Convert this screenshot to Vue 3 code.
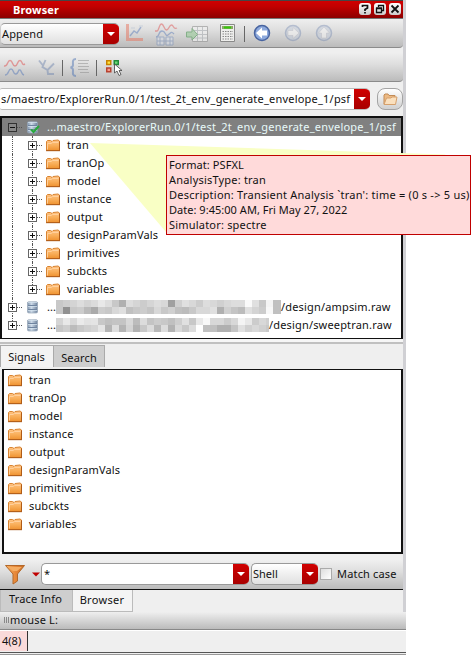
<script setup>
const names = ['tran', 'tranOp', 'model', 'instance', 'output', 'designParamVals', 'primitives', 'subckts', 'variables']
const runs = [
  {
    name: '/design/ampsim.raw',
    cells: [
      'c8 cf d4 dd d4 db e8 dd c8 b0 dd d5 cc d5 dd d8 a0 d0 e0 d8 cc dd d8 d0 d8 dd dd fa e0 c8 f4 c0',
      'c8 91 c8 cc ba aa cd c8 d8 df c0 c8 cc c4 d8 c8 d0 c0 bc c8 d8 d8 e0 b0 d0 c4 bc e0 d4 cc f8 c0',
    ],
  },
  {
    name: '/design/sweeptran.raw',
    cells: [
      'd5 e8 d8 ea e2 e4 c8 c0 c4 c4 d8 bc dc c4 cc c8 c0 ce e0 c8 e8 f8 d8 d8 cc d8 f4 e8 cc d8 d0',
      'c6 ce bc c8 cf d4 e5 b4 dd b4 d4 b2 c8 dc b8 dc b2 d8 c8 dc ff c0 c0 b0 b0 c4 e0 d0 d8 d0 c8',
    ],
  },
]
runs.forEach(r => { r.cells = r.cells.map(l => l.split(' ').map(c => '#' + c + c + c)) })
const info = [
  ['Format: PSFXL', 'i0'],
  ['AnalysisType: tran', 'i1'],
  ["Description: Transient Analysis `tran': time = (0 s -> 5 us)", 'i2'],
  ['Date: 9:45:00 AM, Fri May 27, 2022', 'i3'],
  ['Simulator: spectre', 'i4'],
]
</script>

<template>
  <svg class="defs" width="0" height="0">
    <defs>
      <linearGradient id="gFolder" x1="0" y1="0" x2="0" y2="1"><stop offset="0" stop-color="#ffc486" /><stop offset=".5" stop-color="#f9b05c" /><stop offset="1" stop-color="#ef9230" /></linearGradient>
      <linearGradient id="gFunnel"><stop offset="0" stop-color="#f8b568" /><stop offset=".5" stop-color="#e8893a" /><stop offset="1" stop-color="#c96a20" /></linearGradient>
      <linearGradient id="gDb"><stop offset="0" stop-color="#8195ad" /><stop offset=".4" stop-color="#cbd8e6" /><stop offset="1" stop-color="#6e829c" /></linearGradient>
      <symbol id="folder" viewBox="0 0 14 13">
        <path d="M.5 11.5V2.500L1.500 1.500H4.500L6 2.500L7 1.500L12 1L13.500 2V11.500Z" fill="url(#gFolder)" stroke="#d98431" />
        <path d="M1.500 10.500V4.500H5L6.500 3.500H12.500" fill="none" stroke="#ffd3a0" stroke-width=".9" />
        <path d="M0 11.700H14M13.600 2.500V11.500" fill="none" stroke="#a65312" stroke-width=".9" />
      </symbol>
      <symbol id="db" viewBox="0 0 11 13">
        <path d="M.5 1.500Q.5 .8 2 .8H9Q10.500 .8 10.500 1.500V11Q10.500 12 9 12H2Q.5 12 .5 11Z" fill="url(#gDb)" stroke="#96a6b8" stroke-width=".7" />
        <path d="M1 4.500H10M1 8.500H10" fill="none" stroke="#6f84a0" />
        <path d="M1 1.500H10M1 5.500H10M1 9.500H10" fill="none" stroke="#d9e6f0" stroke-width=".7" />
      </symbol>
    </defs>
  </svg>

  <div class="shot">
    <div class="upper">
      <div class="panel">
        <header class="title">
          <span>Browser</span>
          <div class="wins">
            <svg class="win" viewBox="0 0 12 12"><path d="M3.500 4V2.500H8.500V5L6 6.500V8M6 9V10.500" fill="none" stroke="#111" stroke-width="1.700" /></svg>
            <svg class="win" viewBox="0 0 12 12"><path d="M4.500 4V2.500H9.500V7.500H8M4 2.500H10M2.500 5.500H7.500V9.500H2.500ZM2 5H8" fill="none" stroke="#111" stroke-width="1.300" /></svg>
            <svg class="win" viewBox="0 0 12 12"><path d="M2.500 2.500L9.500 9.500M9.500 2.500L2.500 9.500" stroke="#111" stroke-width="1.800" /></svg>
          </div>
        </header>

        <div class="bar bar1">
          <div class="combo c-append"><span class="val t-append">Append</span><i class="drop"></i></div>
          <svg class="tools" width="220" height="28" viewBox="119 19 220 28">
            <g opacity=".45" fill="none">
              <path d="M127.500 24V39.500H143" stroke="#e86850" stroke-width="3" />
              <path d="M130 36L134 31L137 33L141 27" stroke="#5477b8" stroke-width="1.400" />
              <path d="M139 26H143M131 28H135" stroke="#aabbd0" />
              <path d="M155 31H157C159 31 159 24 161.500 24S164 30 166.500 30S169 25 171.500 25S173 30 177 28" stroke="#dd4848" stroke-width="1.300" />
              <path d="M156 37C160 37 158 31 162 31S165 37 168 35S171 31 174 34" stroke="#5477b8" stroke-width="1.300" />
              <path d="M157 37H164V45H157ZM166 37H173V45H166ZM157 41H173M160 37V45M170 37V45" fill="#dfe5ef" stroke="#6a85b6" />
            </g>
            <g opacity=".65">
              <path d="M192.500 26.500H207.500V41.500H192.500Z" fill="#f1f1f1" stroke="#999" />
              <path d="M193 30.500H207M193 34.500H207M193 38H207M197.500 27V41M202.500 27V41" stroke="#b2b6ba" />
              <path d="M186.500 32H192V28.500L197.500 34.500L192 40V37H186.500Z" fill="#9ecb9e" stroke="#599b60" />
            </g>
            <path d="M220.500 24.500H234.500V41.500H220.500Z" fill="#eeeeec" stroke="#898989" />
            <path d="M222 27.500H233" stroke="#8aab65" stroke-width="3" /><path d="M224 27.500H231" stroke="#36c70b" stroke-width="2" />
            <path d="M222.500 31.500H233M222.500 34H233M222.500 36.500H233M222.500 39H233" stroke="#888" stroke-width="1.200" stroke-dasharray="1.500 1" />
            <path d="M244.500 26V42" stroke="#666" />
            <circle cx="262" cy="33" r="7.500" fill="#8da9dc" stroke="#4864a0" stroke-width="1.500" /><path d="M256 33L262 27.500V30.500H267V35.500H262V38.500Z" fill="#fff" />
            <g opacity=".4"><circle cx="293" cy="33" r="7.500" fill="#bdc9dc" stroke="#6e84af" stroke-width="1.500" /><path d="M299 33L293 27.500V30.500H288V35.500H293V38.500Z" fill="#fff" stroke="#99a" stroke-width=".5" /></g>
            <g opacity=".4"><circle cx="324" cy="33" r="7.500" fill="#bdc9dc" stroke="#6e84af" stroke-width="1.500" /><path d="M324 27L318.500 33H321.500V38H326.500V33H329.500Z" fill="#fff" stroke="#99a" stroke-width=".5" /></g>
          </svg>
        </div>

        <div class="bar bar2">
          <svg width="130" height="28" viewBox="0 53 130 28">
            <g fill="none" opacity=".48">
              <path d="M4 66C8 67 7 60.500 10 60.500S12 66 15 66S17 60.500 20 60.500S21 66 25 64" stroke="#dd4848" stroke-width="1.400" />
              <path d="M5 75C9 75 8 69 11 69S13 75 16 74S18 69 20 70S21 74 24 75" stroke="#5477b8" stroke-width="1.400" />
              <path d="M39 60.500L43 65.500M45.500 60L42.500 67L47.500 70M54 63.500L47.500 70L48 74H54" stroke="#7187b0" stroke-width="1.900" />
              <path d="M76 59C72 59 73 62 73 65Q73 67 70.500 67.500Q73 68 73 70C73 73 72 76 76 76" stroke="#4c73b4" stroke-width="2" />
              <path d="M78 60.500H89M78 63.500H88M78 66.500H89M78 69.500H88M80 72.500H89" stroke="#888" stroke-width="1.200" />
            </g>
            <path d="M62.500 60V76M96.500 60V76" stroke="#666" />
            <path d="M106.750 60.750H110.750V64.500H106.750Z" fill="#ffe440" stroke="#c88200" stroke-width="1.500" />
            <path d="M114.250 60.750H118.250V64.500H114.250Z" fill="#6fdc7a" stroke="#218b38" stroke-width="1.500" />
            <path d="M106.750 68H110.750V71.750H106.750Z" fill="#f59a88" stroke="#b84230" stroke-width="1.500" />
            <path d="M114 68H117" stroke="#5477b8" stroke-width="2" />
            <path d="M114.500 64L114.500 73L117 71L119 75.500L121 74.500L119 70.500H122Z" fill="#fff" stroke="#444" stroke-width=".8" />
          </svg>
        </div>

        <div class="pathrow">
          <div class="combo c-path"><span class="val wide">s/maestro/ExplorerRun.0/1/test_2t_env_generate_envelope_1/psf</span><i class="drop"></i></div>
          <div class="open">
            <svg width="15" height="13" viewBox="0 0 15 13"><path d="M1 11V2L2 1H5L6 2.500H12V5" fill="#edba84" stroke="#c28b56" /><path d="M1 11.500L3.500 5H8L9 4H14L12.500 11.500Z" fill="#fae0be" stroke="#d5a06c" /></svg>
          </div>
        </div>

        <div class="tree">
          <div class="row root">
            <i class="box minus"></i><i class="stub"></i>
            <span class="dbs"><svg width="11" height="13"><use href="#db" /></svg><svg class="check" width="10" height="9" viewBox="0 0 10 9"><path d="M1 4.500L3.500 7L9 1" fill="none" stroke="#28a93c" stroke-width="2.200" /></svg></span>
            <span class="wide">...maestro/ExplorerRun.0/1/test_2t_env_generate_envelope_1/psf</span>
          </div>
          <div v-for="(n, i) in names" :key="n" class="row kid" :class="{ last: i === names.length - 1 }">
            <i class="box"></i><i class="stub"></i>
            <svg class="fold" width="14" height="13"><use href="#folder" /></svg>
            <span class="name">{{ n }}</span>
          </div>
          <div v-for="(r, i) in runs" :key="r.name" class="row run" :class="'run' + i">
            <i class="box"></i><i class="stub"></i>
            <svg class="dbi" width="11" height="13"><use href="#db" /></svg>
            <span class="dots">...</span>
            <div class="mosaic"><div v-for="(l, j) in r.cells" :key="j" class="line"><i v-for="(c, k) in l" :key="k" :style="{ background: c }"></i></div></div>
            <span class="raw">{{ r.name }}</span>
          </div>
        </div>

        <div class="split"></div>
        <div class="tabs"><div class="tab on"><span>Signals</span></div><div class="tab off"><span class="name">Search</span></div></div>
        <div class="list">
          <div v-for="n in names" :key="n" class="item"><svg width="14" height="13"><use href="#folder" /></svg><span class="name">{{ n }}</span></div>
        </div>
        <div class="filter">
          <svg width="41" height="28" viewBox="0 560 41 28">
            <path d="M5.500 565.500H24.500L17.500 574V581L13 584V574Z" fill="url(#gFunnel)" stroke="#b3682a" />
            <path d="M8 567H22L17 571H13Z" fill="#f5ad63" /><path d="M32 572.500H40L36 576.500Z" fill="#c00000" />
          </svg>
          <div class="combo c-star"><span class="val">*</span><i class="drop"></i></div>
          <div class="combo c-shell"><span class="val">Shell</span><i class="drop"></i></div>
          <i class="chk"></i><span class="raw">Match case</span>
        </div>
        <div class="btabs"><div class="btab dark"><span class="raw">Trace Info</span></div><div class="btab"><span class="brow">Browser</span></div></div>
      </div>
    </div>
    <div class="mouse"><i class="grip"></i><span class="raw">mouse L:</span></div>
    <div class="status"><div class="count"><span>4(8)</span></div></div>
    <div class="foot"></div>

    <svg class="beam" width="356" height="92" viewBox="0 0 356 92"><path d="M0 0L356 11.500L76 89Z" fill="#f9ffc5" /></svg>
    <div class="tip"><div v-for="l in info" :key="l[1]"><span :class="l[1]">{{ l[0] }}</span></div></div>
  </div>
</template>

<style>
body { margin: 0; background: #fff; overflow: hidden; }
</style>
<style scoped>
* { box-sizing: border-box; }
svg { display: block; flex: none; }
i { display: block; flex: none; font-style: normal; }
span { white-space: pre; }
.name { letter-spacing: .15px; }
.raw { letter-spacing: .17px; }
.wide { letter-spacing: .21px; }
.brow { letter-spacing: .3px; }
.defs { position: absolute; }
.shot { position: relative; width: 471px; height: 655px; overflow: hidden; background: #fff; font: 11px/18px "Noto Sans", sans-serif; color: #111; }
.upper { width: 406px; height: 612px; background: #d0d0d4; }
.panel { width: 403px; height: 612px; background: #efefef; display: flex; flex-direction: column; }
.title { height: 19px; flex: none; border-top: 1px solid #454545; background: linear-gradient(#d00000, #c00000 35%, #8c0000); border-bottom: 1px solid #777; color: #fff; font-weight: bold; display: flex; justify-content: space-between; padding: 0 2px 0 13px; letter-spacing: .15px; }
.wins { display: flex; gap: 3px; padding-top: 2px; }
.win { width: 12px; height: 12px; border-radius: 3px; background: linear-gradient(#fff, #ccc); }
.bar { height: 29px; flex: none; background: linear-gradient(#efefef, #dedede 40%, #bbb); border-bottom: 1px solid #8b8b8b; border-bottom-right-radius: 4px; display: flex; align-items: center; }
.bar2 { margin-top: 5px; }
.combo { height: 22px; flex: none; display: flex; align-items: center; border: 1px solid #999; border-right: 0; border-radius: 5px; background: #fff; overflow: hidden; }
.c-append, .c-shell { background: linear-gradient(#fff, #e0e0e0); }
.c-append { width: 119px; margin-top: 2px; border-left: 1px solid #ccc; }
.c-path { width: 370px; border-left: 0; border-radius: 2px 5px 5px 2px; border-color: #bbb; }
.c-star { width: 208px; }
.c-shell { width: 67px; margin-left: 2px; }
.val { flex: 1; padding-left: 1px; overflow: hidden; }
.t-append { letter-spacing: .15px; }
.c-star .val { padding-left: 2px; }
.drop { width: 16px; height: 20px; background: linear-gradient(#d00000, #a80000); display: flex; align-items: center; justify-content: center; }
.drop::after { content: ""; border: 4px solid transparent; border-top-color: #fff; border-bottom: 0; }
.pathrow { display: flex; height: 34px; flex: none; padding-top: 6px; }
.open { margin-left: 7px; width: 26px; height: 22px; border: 1px solid #a4a4a4; border-radius: 8px; background: linear-gradient(#fff, #d0d0d0); display: flex; align-items: center; justify-content: center; }
.tree { height: 223px; flex: none; border: 2px solid #111; border-bottom-width: 1px; background: #fff; }
.row { display: flex; align-items: center; height: 18px; position: relative; }
.root { background: #808080; color: #e8fafa; padding-left: 6px; }
.box { width: 9px; height: 9px; border: 1px solid #666; background: linear-gradient(#111, #111) center/5px 1px no-repeat, linear-gradient(#111, #111) center/1px 5px no-repeat, #fff; position: relative; z-index: 1; }
.minus { background: linear-gradient(#111, #111) center/5px 1px no-repeat, #888; border-color: #333; }
.stub { width: 5px; border-top: 1px dotted #555; }
.dbs { position: relative; margin-left: 5px; width: 20px; }
.check { position: absolute; left: 3px; top: 4px; }
.kid { padding-left: 26px; }
.kid .fold { margin: 0 7px 0 4px; }
.kid::before { content: ""; position: absolute; left: 30px; top: 0; height: 18px; border-left: 1px dotted #555; }
.kid.last::before { height: 9px; }
.kid::after, .run0::after { content: ""; position: absolute; left: 10px; top: 0; height: 18px; border-left: 1px dotted #555; }
.run { padding-left: 6px; }
.run1::after { content: ""; position: absolute; left: 10px; top: 0; height: 9px; border-left: 1px dotted #555; }
.dbi { margin-left: 5px; }
.dots { margin-left: 9px; width: 8px; }
.run .mosaic { margin-left: 1px; }
.mosaic { flex: none; }
.line { display: flex; }
.line i { width: 7px; height: 7px; }
.run0 .line i:last-child { width: 8px; }
.run1 .line i:last-child { width: 3px; }
.split { height: 6px; flex: none; background: linear-gradient(#f6f6f6 0 3px, #c0c0c0 3px 5px, #efefef 5px); }
.tabs { height: 24px; flex: none; display: flex; padding-left: 0; }
.tab { height: 22px; display: flex; align-items: center; justify-content: center; border: 1px solid #aaa; border-bottom: 0; }
.on { width: 53px; border-right: 0; background: #f3f3f3; padding-right: 1px; }
.off { width: 52px; background: #cecece; padding-top: 2px; }
.list { margin-left: 2px; height: 185px; flex: none; border: 2px solid #111; border-top-width: 1px; background: #fff; padding: 1px 0 0 4px; }
.item { display: flex; height: 18px; align-items: center; gap: 7px; }
.filter { margin-top: 6px; height: 30px; flex: none; display: flex; align-items: center; padding-bottom: 1px; border-bottom: 1px solid #111; background: linear-gradient(#efefef, #dedede 40%, #bbb); }
.chk { width: 12px; height: 12px; margin: 0 5px 0 2px; border: 1px solid #aaa; background: linear-gradient(135deg, #ddd, #fff); }
.btabs { display: flex; height: 23px; flex: none; }
.btab { width: 61px; height: 22px; display: flex; align-items: center; justify-content: center; border: 1px solid #bbb; border-top: 0; background: #f4f4f4; padding: 0 1px 1px 0; }
.dark { width: 72px; background: #cecece; padding-bottom: 3px; padding-right: 2px; border-right: 0; }
.mouse { width: 406px; height: 18px; background: linear-gradient(#efefef, #bbb); border-bottom: 1px solid #888; display: flex; align-items: center; padding: 0 0 2px 4px; }
.grip { width: 6px; height: 6px; background: repeating-linear-gradient(90deg, #888 0 1px, transparent 1px 2px); }
.status { width: 406px; height: 22px; background: #efefef; border-bottom: 1px solid #555; }
.count { width: 28px; height: 20px; margin-top: 1px; background: #fadada; border-right: 1px solid #333; padding-left: 2px; display: flex; align-items: center; }
.foot { width: 406px; height: 3px; background: #999; border-top: 1px solid #eee; }
.beam { position: absolute; left: 90px; top: 143px; }
.tip { position: absolute; left: 166px; top: 155px; width: 305px; height: 80px; border: 1px solid #c00000; background: #ffdada; padding: 1px 0 0 2px; line-height: 15px; z-index: 2; }
.i0 { letter-spacing: .08px; }
.i1, .i4 { letter-spacing: .2px; }
.i2 { letter-spacing: .24px; }
.i3 { letter-spacing: .03px; }
</style>
